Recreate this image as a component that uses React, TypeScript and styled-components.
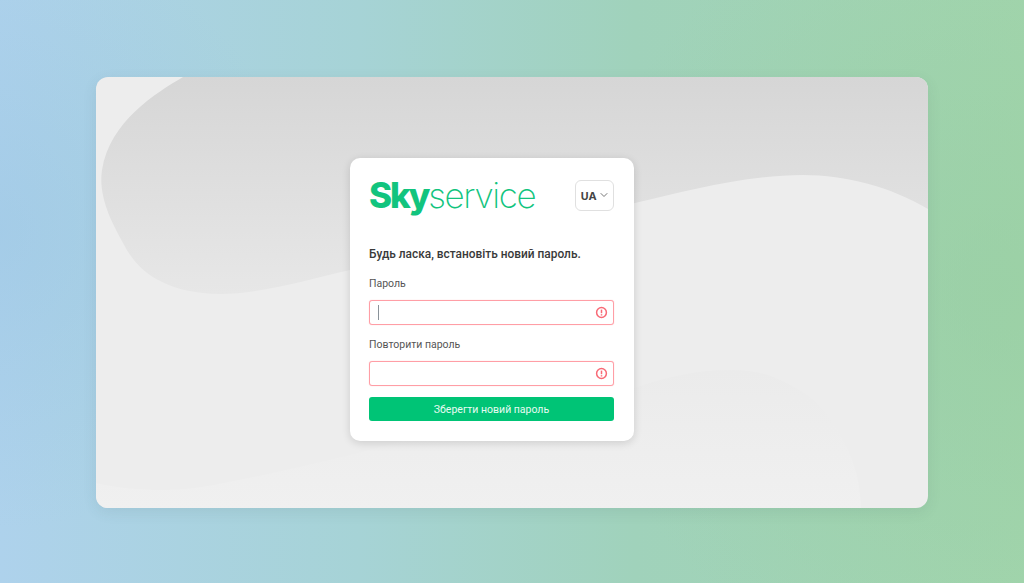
import React from "react";
import styled, { createGlobalStyle } from "styled-components";
import { FiChevronDown } from "react-icons/fi";

const GlobalStyle = createGlobalStyle`
    html, body {
        margin: 0;
        padding: 0;
        height: 100%;
    }
    body {
        font-family: Roboto, "Noto Sans", sans-serif;
    }
`;

const Page = styled.div`
    width: 1024px;
    height: 583px;
    box-sizing: border-box;
    padding: 77px 96px 75px;
    overflow: hidden;
    background:
        radial-gradient(ellipse 300px 300px at 0px 230px, rgba(150, 195, 225, 0.4), rgba(150, 195, 225, 0) 100%),
        radial-gradient(ellipse 420px 420px at 1000px 290px, rgba(150, 205, 160, 0.55), rgba(150, 205, 160, 0) 100%),
        linear-gradient(90deg, #aed2ec 0%, #a6d3d6 35%, #a0d2bb 62%, #a2d5ad 100%);
`;

const Panel = styled.div`
    position: relative;
    height: 431px;
    box-sizing: border-box;
    padding: 81px 0 0 254px;
    border-radius: 12px;
    background: #ededed;
    box-shadow: 0 4px 14px rgba(60, 90, 90, 0.1);
    overflow: hidden;
`;

const Blobs = styled.svg`
    position: absolute;
    left: 0;
    top: 0;
    width: 832px;
    height: 431px;
`;

const Card = styled.div`
    position: relative;
    width: 284px;
    height: 283px;
    box-sizing: border-box;
    padding: 20px 20px 0 19px;
    border-radius: 10px;
    background: #ffffff;
    box-shadow: 0 2px 8px rgba(0, 0, 0, 0.14);
`;

const Header = styled.div`
    display: flex;
    justify-content: space-between;
    align-items: center;
    height: 34px;
    margin-bottom: 33px;
`;

const Logo = styled.div`
    display: flex;
    align-items: baseline;
    color: #12c47e;
    font-family: Inter, sans-serif;
    font-size: 35px;
    line-height: 34px;
`;

const LogoStrong = styled.span`
    font-weight: 800;
    letter-spacing: -2.2px;
`;

const LogoLight = styled.span`
    font-weight: 200;
    letter-spacing: -1.4px;
`;

const LangButton = styled.button`
    display: flex;
    align-items: center;
    justify-content: center;
    gap: 2px;
    width: 39px;
    height: 31px;
    padding: 0 0 0 2px;
    border: 1px solid #e0e0e0;
    border-radius: 6px;
    background: #ffffff;
    color: #444444;
    font-family: "Noto Sans", sans-serif;
    font-size: 11px;
    font-weight: 700;
`;

const Title = styled.h1`
    margin: 0 0 13px;
    color: #3a3a3a;
    font-size: 11.9px;
    line-height: 18px;
    font-weight: 500;
`;

const Label = styled.label`
    display: block;
    margin: 12px 0 8px;
    color: #555555;
    font-size: 10.5px;
    line-height: 16px;
`;

const Field = styled.div`
    display: flex;
    align-items: center;
    justify-content: space-between;
    height: 25px;
    box-sizing: border-box;
    padding: 0 5px 0 8px;
    border: 1px solid #ff9ea6;
    border-radius: 3px;
    background: #ffffff;
    box-shadow: 0 0 1px #ffb4ba;
`;

const Caret = styled.span`
    width: 1px;
    height: 15px;
    background: #8a9299;
`;

const SaveButton = styled.button`
    display: block;
    width: 100%;
    height: 24px;
    margin-top: 11px;
    padding: 0;
    border: none;
    border-radius: 3px;
    background: #00c476;
    color: #e8fbf2;
    font-family: inherit;
    font-size: 10.5px;
`;

const AlertIcon = () => (
    <svg width="13" height="13" viewBox="0 0 13 13" fill="none">
        <circle cx="6.5" cy="6.5" r="4.9" stroke="#f86a76" strokeWidth="1.5" />
        <path d="M6.5 3.6V7.2" stroke="#f86a76" strokeWidth="1.5" />
        <path d="M6.5 8.2V9.5" stroke="#f86a76" strokeWidth="1.5" />
    </svg>
);

export default function App() {
    return (
        <>
            <GlobalStyle />
            <Page>
                <Panel>
                    <Blobs viewBox="0 0 832 431">
                        <defs>
                            <linearGradient id="topBlob" x1="0" y1="0" x2="0" y2="1">
                                <stop offset="0" stopColor="#d6d6d6" />
                                <stop offset="1" stopColor="#e7e7e7" />
                            </linearGradient>
                            <linearGradient id="bottomBlob" x1="0" y1="0" x2="0" y2="1">
                                <stop offset="0" stopColor="#ebebeb" />
                                <stop offset="1" stopColor="#f0f0f0" />
                            </linearGradient>
                        </defs>
                        <path
                            d="M87 0 C60 16 14 44 6 93 C2 120 16 146 27 166 C42 196 70 216 124 217 C165 217 210 203 254 193 C350 170 450 146 539 126 C590 114 650 98 707 98 C750 98 795 110 832 132 L832 0 Z"
                            fill="url(#topBlob)"
                        />
                        <path
                            d="M0 406 C22 411 45 413 67 413 C90 413 108 410 127 406 C170 398 212 388 254 378 C350 352 450 322 539 311 C570 300 600 293 634 293 C655 293 672 297 684 303 C700 310 712 318 721 326 C735 342 742 352 747 363 C757 382 764 400 765 431 L0 431 Z"
                            fill="url(#bottomBlob)"
                        />
                    </Blobs>
                    <Card>
                        <Header>
                            <Logo>
                                <LogoStrong>Sky</LogoStrong>
                                <LogoLight>service</LogoLight>
                            </Logo>
                            <LangButton>
                                UA <FiChevronDown size={12} color="#777777" />
                            </LangButton>
                        </Header>
                        <Title>Будь ласка, встановіть новий пароль.</Title>
                        <Label>Пароль</Label>
                        <Field>
                            <Caret />
                            <AlertIcon />
                        </Field>
                        <Label>Повторити пароль</Label>
                        <Field>
                            <span />
                            <AlertIcon />
                        </Field>
                        <SaveButton>Зберегти новий пароль</SaveButton>
                    </Card>
                </Panel>
            </Page>
        </>
    );
}
